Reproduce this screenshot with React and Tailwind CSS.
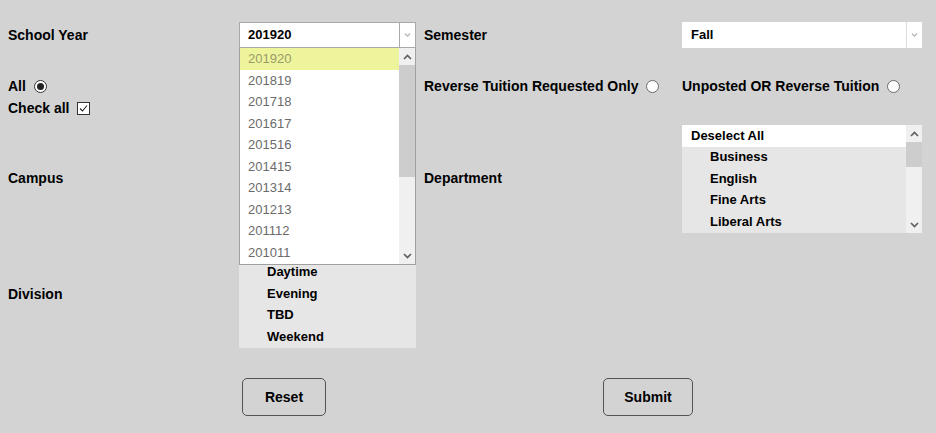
import React from "react";

const Chev = ({ up, className = "" }) => (
  <svg width="9" height="6" viewBox="0 0 9 6" className={className}>
    <path
      d={up ? "M1 5L4.5 1.5L8 5" : "M1 1L4.5 4.5L8 1"}
      fill="none"
      stroke="currentColor"
      strokeWidth="1.7"
    />
  </svg>
);

const Scrollbar = ({ thumbTop, thumbH }) => (
  <div className="flex w-[16px] shrink-0 flex-col bg-[#f0f0f0]">
    <div className="flex h-[17px] items-center justify-center text-[#606060]">
      <Chev up />
    </div>
    <div className="relative flex-1">
      <div
        className="absolute left-0 w-[16px] bg-[#cdcdcd]"
        style={{ top: thumbTop, height: thumbH }}
      />
    </div>
    <div className="flex h-[17px] items-center justify-center text-[#606060]">
      <Chev />
    </div>
  </div>
);

const Listbox = ({ header = "Deselect All", items, scroll }) => (
  <div className="flex h-[108px] w-full overflow-hidden bg-[#e6e6e6] text-[13px] font-bold text-black">
    <div className="flex flex-1 flex-col">
      <div className="flex h-[21.5px] shrink-0 items-center bg-white pl-[9px]">{header}</div>
      {items.map((it, i) => (
        <div key={i} className="flex h-[21.4px] shrink-0 items-center pl-[28px]">
          {it}
        </div>
      ))}
    </div>
    {scroll && <Scrollbar thumbTop={0} thumbH={25} />}
  </div>
);

const Radio = ({ checked }) => (
  <span
    className={`ml-[8px] inline-flex h-[13px] w-[13px] items-center justify-center rounded-full border bg-white ${
      checked ? "border-[#333]" : "border-[#6a6a6a]"
    }`}
  >
    {checked && <span className="h-[7px] w-[7px] rounded-full bg-[#222]" />}
  </span>
);

const years = ["201920", "201819", "201718", "201617", "201516", "201415", "201314", "201213", "201112", "201011"];

export default function App() {
  return (
    <div className="min-h-[433px] w-[936px] bg-[#d3d3d3] pl-[8px] pt-[22px] font-['Liberation_Sans',Arial,sans-serif] text-[14px] font-bold text-black">
      <div className="grid grid-cols-[231px_177px_266px_240px] grid-rows-[26px_76px_108px_116px]">
        {/* Row 1 */}
        <div className="flex items-center">School Year</div>
        <div className="relative z-10">
          <div className="flex h-[26px] border border-[#a9a9a9] bg-white">
            <div className="flex flex-1 items-center pl-[8px] text-[13px]">201920</div>
            <div className="flex w-[16px] items-center justify-center border-l border-[#a9a9a9] text-[#b5b5b5]">
              <Chev className="scale-75" />
            </div>
          </div>
          <div className="absolute left-0 top-[26px] flex h-[217px] w-[177px] border border-t-0 border-[#a0a0a0] bg-white">
            <div className="flex flex-1 flex-col text-[13px] font-normal text-[#6b6b6b]">
              {years.map((y, i) => (
                <div
                  key={y}
                  className={`flex h-[21.5px] shrink-0 items-center pl-[8px] ${
                    i === 0 ? "bg-[#eef49c] text-[#9a9a6a]" : ""
                  }`}
                >
                  {y}
                </div>
              ))}
            </div>
            <Scrollbar thumbTop={0} thumbH={112} />
          </div>
        </div>
        <div className="flex items-center pl-[8px]">Semester</div>
        <div className="flex h-[26px] bg-white">
          <div className="flex flex-1 items-center pl-[9px] text-[13px]">Fall</div>
          <div className="flex w-[16px] items-center justify-center border-l border-[#dcdcdc] text-[#b5b5b5]">
            <Chev className="scale-75" />
          </div>
        </div>

        {/* Row 2 */}
        <div className="flex flex-col pt-[27px]">
          <div className="flex h-[22px] items-center">
            All <Radio checked />
          </div>
          <div className="flex h-[22px] items-center">
            Check all
            <span className="ml-[8px] inline-flex h-[13px] w-[13px] items-center justify-center border border-[#333] bg-white">
              <svg width="11" height="11" viewBox="0 0 11 11">
                <path d="M2 5.5L4.5 8L9 2.5" fill="none" stroke="#222" strokeWidth="1.1" />
              </svg>
            </span>
          </div>
        </div>
        <div />
        <div className="flex flex-col pl-[8px] pt-[27px]">
          <div className="flex h-[22px] items-center">
            Reverse Tuition Requested Only <Radio />
          </div>
        </div>
        <div className="flex flex-col pt-[27px]">
          <div className="flex h-[22px] items-center">
            Unposted OR Reverse Tuition <Radio />
          </div>
        </div>

        {/* Row 3 */}
        <div className="flex items-center">Campus</div>
        <div className="pt-[1px]">
          <Listbox header="" items={[]} />
        </div>
        <div className="flex items-center pl-[8px]">Department</div>
        <div className="pt-[1px]">
          <Listbox items={["Business", "English", "Fine Arts", "Liberal Arts"]} scroll />
        </div>

        {/* Row 4 */}
        <div className="flex items-center pt-[8px]">Division</div>
        <div className="pt-[8px]">
          <Listbox header="" items={["Daytime", "Evening", "TBD", "Weekend"]} />
        </div>
        <div />
        <div />
      </div>

      <div className="mt-[30px] flex pl-[234px]">
        <button className="h-[38px] w-[84px] rounded-[5px] border border-[#555] bg-transparent text-[14px] font-bold text-black">
          Reset
        </button>
        <button className="ml-[277px] h-[38px] w-[90px] rounded-[5px] border border-[#555] bg-transparent text-[14px] font-bold text-black">
          Submit
        </button>
      </div>
    </div>
  );
}
